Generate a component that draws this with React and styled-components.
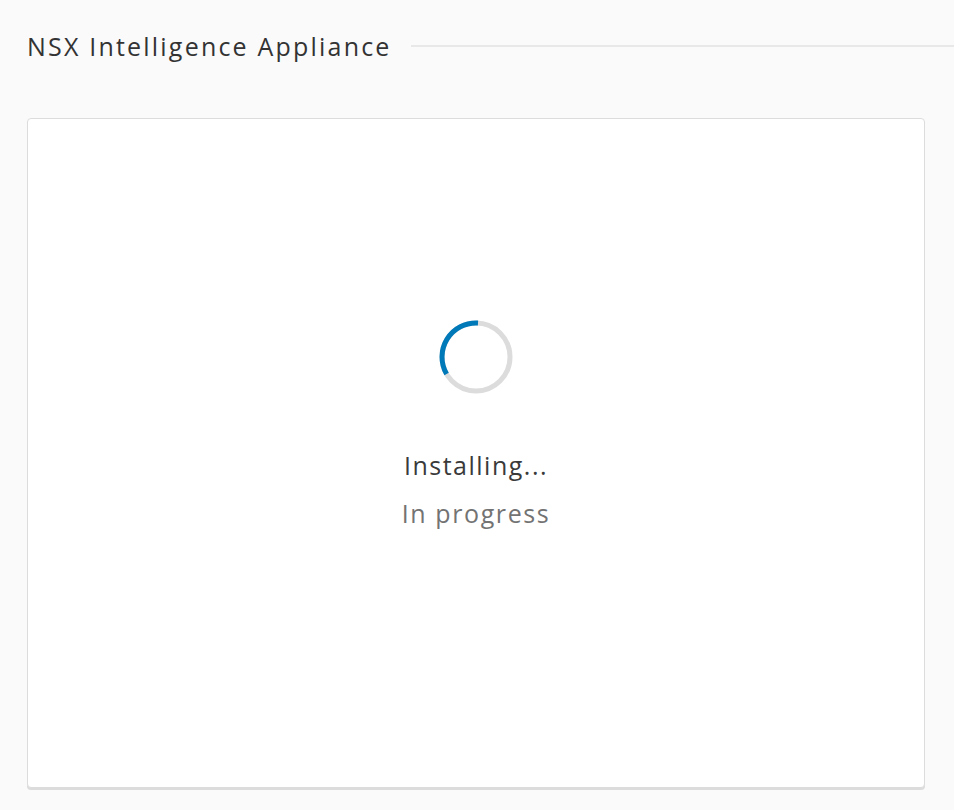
import React from "react";
import styled, { createGlobalStyle } from "styled-components";

const GlobalStyle = createGlobalStyle`
  html, body {
    margin: 0;
    padding: 0;
    background: #fafafa;
  }
  body {
    font-family: "Open Sans", Lato, sans-serif;
    color: #333;
  }
`;

const Spinner = () => (
  <svg width="76" height="76" viewBox="0 0 76 76">
    <circle cx="38" cy="38" r="34" fill="none" stroke="#dcdcdc" strokeWidth="5" />
    {/* blue arc from about 12 o'clock, going counter-clockwise to about 8 o'clock */}
    <path
      d="M 40 4 A 34 34 0 0 0 8.6 55"
      fill="none"
      stroke="#0079b8"
      strokeWidth="5"
    />
  </svg>
);

const App = () => {
  return (
    <>
      <GlobalStyle />
      <Page>
        <SectionHeader>
          <Title>NSX Intelligence Appliance</Title>
          <Rule />
        </SectionHeader>
        <Card>
          <SpinnerWrap>
            <Spinner />
          </SpinnerWrap>
          <Status>Installing...</Status>
          <SubStatus>In progress</SubStatus>
        </Card>
      </Page>
    </>
  );
};

export default App;

const Page = styled.div`
  width: 954px;
  height: 810px;
  box-sizing: border-box;
  padding: 29px 0 0 27px;
  overflow: hidden;
`;

const SectionHeader = styled.div`
  display: flex;
  align-items: center;
  height: 34px;
`;

const Title = styled.div`
  font-size: 25px;
  color: #333;
  white-space: nowrap;
  letter-spacing: 2.2px;
`;

const Rule = styled.div`
  flex: 1;
  height: 2px;
  background: #e8e8e8;
  margin-left: 19px;
`;

const Card = styled.div`
  margin-top: 55px;
  width: 898px;
  height: 670px;
  box-sizing: border-box;
  background: #fff;
  border: 1px solid #dcdcdc;
  border-radius: 4px;
  box-shadow: 0 2px 0 #dcdcdc;
  display: flex;
  flex-direction: column;
  align-items: center;
  padding-top: 200px;
`;

const SpinnerWrap = styled.div`
  display: flex;
  width: 76px;
  height: 76px;
`;

const Status = styled.div`
  margin-top: 53px;
  font-size: 25px;
  letter-spacing: 1.5px;
  color: #3a3a3a;
`;

const SubStatus = styled.div`
  margin-top: 14px;
  font-size: 25px;
  letter-spacing: 1.6px;
  color: #737373;
`;
